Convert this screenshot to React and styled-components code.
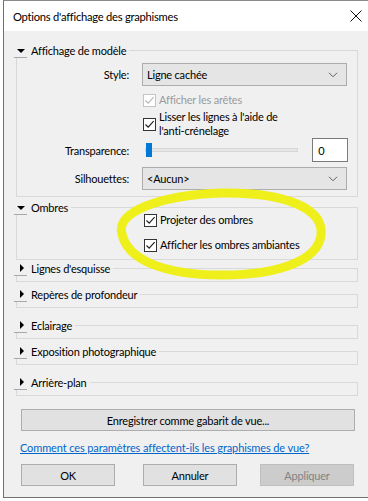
import React from 'react';
import styled, { createGlobalStyle } from 'styled-components';

const GlobalStyle = createGlobalStyle`
  html, body {
    margin: 0;
    padding: 0;
    background: #ffffff;
  }
  body {
    font-family: Lato, "Noto Sans", sans-serif;
    font-size: 11px;
    letter-spacing: -0.2px;
    color: #000;
  }
`;

// Page et fenêtre
const Page = styled.div`
  position: relative;
  width: 368px;
  height: 501px;
  overflow: hidden;
  padding-left: 3px;
  box-sizing: border-box;
`;

const Window = styled.div`
  width: 365px;
  height: 498px;
  border-top: 1px solid #8a8a8a;
  border-left: 1px solid #6f6f6f;
  border-bottom: 1px solid #6f6f6f;
  box-sizing: border-box;
  display: flex;
  flex-direction: column;
`;

const TitleBar = styled.div`
  height: 30px;
  flex: none;
  background: #ffffff;
  display: flex;
  align-items: center;
  justify-content: space-between;
  padding: 0 6px 0 9px;
  font-size: 11.2px;
  letter-spacing: -0.25px;
`;

const Body = styled.div`
  flex: 1;
  background: #f0f0f0;
  padding: 11px 10px 0 10px;
  display: flex;
  flex-direction: column;
`;

// Groupes repliables
const Section = styled.div`
  margin-top: ${({ $top }) => $top || 0}px;
  display: flex;
  flex-direction: column;
`;

const Header = styled.div`
  height: 16px;
  display: flex;
  align-items: center;
`;

const Toggle = styled.span`
  width: 13px;
  height: 15px;
  flex: none;
  box-sizing: border-box;
  border-bottom: 1px solid #a8a8a8;
  display: flex;
  align-items: center;
  justify-content: center;
  margin-top: 1px;
  &::before {
    content: '';
    display: block;
    border: 4px solid transparent;
    ${({ $open }) =>
      $open
        ? 'border-top: 4px solid #000; border-bottom: 0; margin-top: 1px;'
        : 'border-left: 4px solid #000; border-right: 0; margin-left: 2px;'}
  }
`;

const Title = styled.span`
  padding: 0 3px 0 4px;
  white-space: nowrap;
`;

const Rule = styled.span`
  flex: 1;
  align-self: stretch;
  margin-top: 8px;
  border-top: 1px solid #d9d9d9;
  border-right: 1px solid #d9d9d9;
`;

const Frame = styled.div`
  margin-left: 2px;
  min-height: ${({ $h }) => $h || 0}px;
  border: 1px solid #d9d9d9;
  border-top: 0;
  padding: ${({ $pad }) => $pad || '0'};
  display: flex;
  flex-direction: column;
`;

// Lignes de formulaire
const Row = styled.div`
  display: flex;
  align-items: center;
  height: ${({ $h }) => $h}px;
  margin-top: ${({ $top }) => $top || 0}px;
`;

const Label = styled.span`
  width: 112px;
  flex: none;
  text-align: right;
  padding-right: 13px;
  box-sizing: content-box;
`;

const Spacer = styled.span`
  width: 125px;
  flex: none;
`;

const Combo = styled.div`
  width: 205px;
  height: 23px;
  box-sizing: border-box;
  background: #e5e5e5;
  border: 1px solid #adadad;
  display: flex;
  align-items: center;
  justify-content: space-between;
  padding: 0 8px 0 4px;
`;

const CheckLine = styled.label`
  display: flex;
  align-items: center;
  gap: 3px;
  margin-left: 1px;
  color: ${({ $disabled }) => ($disabled ? '#9b9b9b' : '#000')};
  line-height: 14px;
`;

const Box = styled.span`
  width: 13px;
  height: 13px;
  flex: none;
  box-sizing: border-box;
  background: #fff;
  border: 1px solid ${({ $disabled }) => ($disabled ? '#c4c4c4' : '#333')};
  display: flex;
  align-items: center;
  justify-content: center;
`;

const SliderArea = styled.div`
  width: 168px;
  height: 24px;
  display: flex;
  align-items: center;
  padding-left: 3px;
`;

const Track = styled.div`
  width: 153px;
  height: 4px;
  background: #e7e7e7;
  border: 1px solid #d6d6d6;
  box-sizing: border-box;
  display: flex;
  align-items: center;
`;

const Thumb = styled.span`
  width: 6px;
  height: 14px;
  background: #0078d7;
  flex: none;
`;

const TextBox = styled.div`
  width: 36px;
  height: 24px;
  box-sizing: border-box;
  background: #fff;
  border: 1px solid #7a7a7a;
  display: flex;
  align-items: center;
  padding-left: 5px;
`;

const ShadowChecks = styled.div`
  display: flex;
  flex-direction: column;
  gap: 11px;
  margin-top: -2px;
  padding: 0 0 7px 126px;
`;

// Bas de la boîte de dialogue
const WideButton = styled.button`
  margin: 13px 3px 0 7px;
  height: 22px;
  font: inherit;
  letter-spacing: inherit;
  color: #000;
  background: #e1e1e1;
  border: 1px solid #adadad;
  padding: 0;
`;

const HelpLink = styled.a`
  margin: 9px 0 0 6px;
  line-height: 16px;
  color: #0066cc;
  letter-spacing: -0.12px;
  text-decoration: underline;
  white-space: nowrap;
`;

const Buttons = styled.div`
  display: flex;
  margin: 8px 4px 0 7px;
`;

const Button = styled.button`
  width: 94px;
  height: 22px;
  font: inherit;
  letter-spacing: inherit;
  padding: 0;
  margin-left: ${({ $ml }) => $ml || '0'};
  color: ${({ disabled }) => (disabled ? '#838383' : '#000')};
  background: ${({ disabled }) => (disabled ? '#cccccc' : '#e1e1e1')};
  border: 1px solid ${({ disabled }) => (disabled ? '#bfbfbf' : '#adadad')};
`;

const Highlight = styled.svg`
  position: absolute;
  left: 0;
  top: 0;
  pointer-events: none;
`;

const Check = ({ color = '#222' }) => (
  <svg width="11" height="11" viewBox="0 0 11 11">
    <path d="M1.5 5.5 L4.2 8.2 L9.6 2.2" fill="none" stroke={color} strokeWidth="1.2" />
  </svg>
);

const Chevron = () => (
  <svg width="10" height="6" viewBox="0 0 10 6">
    <path d="M1 0.8 L5 4.8 L9 0.8" fill="none" stroke="#606060" strokeWidth="1" />
  </svg>
);

const CheckItem = ({ children, disabled }) => (
  <CheckLine $disabled={disabled}>
    <Box $disabled={disabled}>
      <Check color={disabled ? '#b8b8b8' : '#222'} />
    </Box>
    <span>{children}</span>
  </CheckLine>
);

const GroupHeader = ({ title, open }) => (
  <Header>
    <Toggle $open={open} />
    <Title>{title}</Title>
    <Rule />
  </Header>
);

const collapsed = [
  { title: "Lignes d'esquisse", top: 0 },
  { title: 'Repères de profondeur', top: 4 },
  { title: 'Eclairage', top: 9 },
  { title: 'Exposition photographique', top: 4 },
  { title: 'Arrière-plan', top: 9 },
];

export default function App() {
  return (
    <Page>
      <GlobalStyle />
      <Window>
        <TitleBar>
          <span>Options d'affichage des graphismes</span>
          <svg width="12" height="12" viewBox="0 0 12 12">
            <path d="M0.5 0.5 L11.5 11.5 M11.5 0.5 L0.5 11.5" stroke="#111" strokeWidth="1" />
          </svg>
        </TitleBar>
        <Body>
          <Section>
            <GroupHeader title="Affichage de modèle" open />
            <Frame $pad="5px 9px 6px 0">
              <Row $h={23}>
                <Label>Style:</Label>
                <Combo>
                  <span>Ligne cachée</span>
                  <Chevron />
                </Combo>
              </Row>
              <Row $h={14} $top={7}>
                <Spacer />
                <CheckItem disabled>Afficher les arêtes</CheckItem>
              </Row>
              <Row $h={28} $top={3}>
                <Spacer />
                <CheckItem>
                  Lisser les lignes à l'aide de
                  <br />
                  l'anti-crénelage
                </CheckItem>
              </Row>
              <Row $h={24}>
                <Label>Transparence:</Label>
                <SliderArea>
                  <Track>
                    <Thumb />
                  </Track>
                </SliderArea>
                <TextBox>0</TextBox>
              </Row>
              <Row $h={23} $top={5}>
                <Label>Silhouettes:</Label>
                <Combo>
                  <span>&lt;Aucun&gt;</span>
                  <Chevron />
                </Combo>
              </Row>
            </Frame>
          </Section>

          <Section $top={2}>
            <GroupHeader title="Ombres" open />
            <Frame>
              <ShadowChecks>
                <CheckItem>Projeter des ombres</CheckItem>
                <CheckItem>Afficher les ombres ambiantes</CheckItem>
              </ShadowChecks>
            </Frame>
          </Section>

          {collapsed.map(s => (
            <Section key={s.title} $top={s.top}>
              <GroupHeader title={s.title} />
              <Frame $h={5} />
            </Section>
          ))}

          <WideButton>Enregistrer comme gabarit de vue...</WideButton>
          <HelpLink href="#">Comment ces paramètres affectent-ils les graphismes de vue?</HelpLink>
          <Buttons>
            <Button>OK</Button>
            <Button $ml="28px">Annuler</Button>
            <Button $ml="auto" disabled>Appliquer</Button>
          </Buttons>
        </Body>
      </Window>
      <Highlight width="368" height="501" viewBox="0 0 368 501">
        <path
          d="M122 234 C115 212 160 195 222 193 C284 192 324 208 321 235 C318 260 280 275 222 275 C160 275 127 258 122 234 Z"
          fill="none"
          stroke="#efef1c"
          strokeWidth="9"
        />
      </Highlight>
    </Page>
  );
}
